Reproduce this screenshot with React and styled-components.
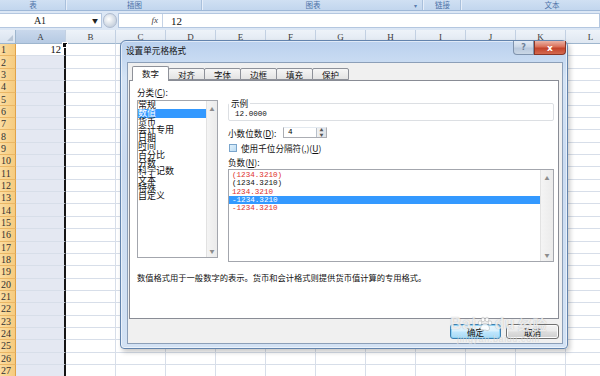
import React from 'react'
import styled, { createGlobalStyle } from 'styled-components'

// Excel 2007 sheet with the "设置单元格格式" dialog open on top of it

const GlobalStyle = createGlobalStyle`
  html, body { margin: 0; padding: 0; background: #fff; }
  body { font-family: "Noto Sans CJK SC", "Liberation Sans", sans-serif; }
`

const Screen = styled.div`
  position: relative;
  width: 600px;
  height: 376px;
  overflow: hidden;
  background: #fff;
  display: flex;
  flex-direction: column;
`

/* ---------- ribbon strip ---------- */
const Ribbon = styled.div`
  display: flex;
  height: 10px;
  background: linear-gradient(#d0e0f3, #c2d6ee);
  border-bottom: 1px solid #9fb8d8;
`
const RibbonGroup = styled.div`
  flex: 0 0 ${p => p.$w}px;
  position: relative;
  display: flex;
  align-items: center;
  justify-content: center;
  border-right: 1px solid #e6eef9;
  box-shadow: inset -1px 0 0 #a9c0dc;
  font-size: 7.5px;
  line-height: 10px;
  color: #4d72a8;
`
const Launcher = styled.span`
  position: absolute;
  right: 6px;
  top: 1px;
  font-size: 6px;
  color: #5a7bab;
`

/* ---------- formula bar ---------- */
const FormulaArea = styled.div`
  display: flex;
  align-items: stretch;
  height: 15px;
  padding: 2px 0 2px;
  background: #dce7f5;
`
const NameBox = styled.div`
  width: 102px;
  display: flex;
  align-items: center;
  background: #fff;
  border: 1px solid #b4c7e0;
  border-left: none;
  box-sizing: border-box;
`
const NameText = styled.span`
  width: 80px;
  text-align: center;
  font-family: "Liberation Serif", serif;
  font-size: 10px;
  color: #222;
`
const DropArrow = styled.span`
  margin-left: 12px;
  font-size: 6px;
  color: #222;
`
const Grip = styled.div`
  width: 14px;
  margin: 0 1px;
  border-radius: 7px;
  background: radial-gradient(circle at 40% 40%, #ffffff, #c9d3df 70%);
  border: 1px solid #aebbd0;
  box-sizing: border-box;
`
const FormulaBox = styled.div`
  flex: 1;
  display: flex;
  align-items: center;
  background: #fff;
  border: 1px solid #b4c7e0;
  box-sizing: border-box;
`
const Fx = styled.span`
  width: 39px;
  text-align: right;
  font-family: "Liberation Serif", serif;
  font-style: italic;
  font-size: 9px;
  color: #444;
  padding-right: 4px;
  border-right: 1px solid #c5d3e6;
  height: 100%;
  line-height: 13px;
`
const FormulaText = styled.span`
  padding-left: 8px;
  font-family: "Liberation Serif", serif;
  font-size: 11px;
  color: #111;
`

/* ---------- worksheet ---------- */
const Sheet = styled.div`
  display: grid;
  grid-template-columns: 16px repeat(12, 50px);
  grid-template-rows: 14px;
  grid-auto-rows: 12.35px;
  margin-top: 0;
`
const Corner = styled.div`
  position: relative;
  background: linear-gradient(#e9eff7, #d9e3ef);
  border-right: 1px solid #9eb6ce;
  border-bottom: 1px solid #9eb6ce;
  &::after {
    content: '';
    position: absolute;
    right: 2px;
    bottom: 2px;
    border-left: 6px solid transparent;
    border-bottom: 6px solid #b9c6d6;
  }
`
const ColHead = styled.div`
  display: flex;
  align-items: center;
  justify-content: center;
  background: ${p => (p.$active ? 'linear-gradient(#c9d8ec, #b6cae3)' : 'linear-gradient(#eef3f9, #dfe7f1)')};
  border-right: 1px solid #c2d0e2;
  border-bottom: 1px solid #9eb6ce;
  font-family: "Liberation Serif", serif;
  font-size: 9px;
  color: #3a3a3a;
`
const RowHead = styled.div`
  display: flex;
  align-items: center;
  padding-left: 1px;
  background: linear-gradient(90deg, #fbdca0, #f6cb7e);
  border-right: 1px solid #e0a24a;
  border-bottom: 1px solid #eab766;
  font-family: "Liberation Serif", serif;
  font-size: 10px;
  color: #333;
  overflow: hidden;
`
const Cell = styled.div`
  position: relative;
  box-sizing: border-box;
  display: flex;
  align-items: center;
  justify-content: flex-end;
  padding-right: 3px;
  background: ${p => (p.$tint ? '#e4e8f2' : '#fff')};
  border-right: ${p => (p.$edge ? '2px solid #151515' : '1px solid #d7dee9')};
  border-bottom: 1px solid #d7dee9;
  font-family: "Liberation Serif", serif;
  font-size: 10.5px;
  color: #111;
`
const FillHandle = styled.span`
  position: absolute;
  right: -4px;
  top: -2px;
  width: 4px;
  height: 4px;
  background: #111;
  border: 1px solid #fff;
`

/* ---------- dialog ---------- */
const Dialog = styled.div`
  position: absolute;
  left: 120px;
  top: 40px;
  width: 448px;
  height: 309px;
  box-sizing: border-box;
  display: flex;
  flex-direction: column;
  border: 1px solid #6384ad;
  border-radius: 6px 6px 4px 4px;
  background: linear-gradient(180deg, #bad1ee 0%, #d4e3f5 12%, #cadbf1 40%, #d3e2f4 100%);
  box-shadow: 2px 3px 5px rgba(0, 0, 0, 0.22), inset 0 0 0 1px rgba(255, 255, 255, 0.55);
`
const TitleBar = styled.div`
  height: 21px;
  display: flex;
  align-items: flex-start;
`
const Title = styled.div`
  padding: 4px 0 0 5px;
  font-size: 8.6px;
  line-height: 11px;
  color: #111;
`
const CaptionButtons = styled.div`
  margin-left: auto;
  margin-right: 1px;
  display: flex;
  height: 14px;
  margin-top: 0;
`
const CaptionBtn = styled.div`
  width: ${p => p.$w}px;
  display: flex;
  align-items: center;
  justify-content: center;
  box-sizing: border-box;
  border: 1px solid ${p => (p.$close ? '#8a3626' : '#7f93ad')};
  border-top: none;
  border-radius: ${p => (p.$close ? '0 0 4px 0' : '0 0 0 4px')};
  background: ${p =>
    p.$close
      ? 'linear-gradient(#eab3a6 0%, #d96e57 45%, #c2432b 55%, #d4694f 100%)'
      : 'linear-gradient(#e3ebf5 0%, #cbd8e8 45%, #b9c9dd 55%, #cad7e6 100%)'};
  color: ${p => (p.$close ? '#fff' : '#6d7f96')};
  font-family: "DejaVu Sans", sans-serif;
  font-weight: bold;
  font-size: ${p => (p.$close ? 9 : 8)}px;
`
const Client = styled.div`
  flex: 1;
  margin: 0 4px 4px 6px;
  display: flex;
  flex-direction: column;
  background: #f0f0f0;
  border: 1px solid #8c9fb8;
`
const TabRow = styled.div`
  display: flex;
  align-items: flex-end;
  height: 14px;
  margin-top: 3px;
  padding-left: 5px;
  position: relative;
  z-index: 1;
`
const Tab = styled.div`
  width: 37px;
  height: ${p => (p.$active ? 15 : 12)}px;
  margin-bottom: ${p => (p.$active ? -1 : 0)}px;
  box-sizing: border-box;
  display: flex;
  align-items: center;
  justify-content: center;
  border: 1px solid #8e9199;
  border-bottom: ${p => (p.$active ? 'none' : '1px solid #8e9199')};
  margin-left: -1px;
  border-radius: 2px 2px 0 0;
  background: ${p => (p.$active ? '#fff' : 'linear-gradient(#f6f6f6, #e3e3e3)')};
  font-size: 8.5px;
  line-height: 10px;
  color: #111;
  padding-bottom: ${p => (p.$active ? 2 : 0)}px;
`
const Panel = styled.div`
  height: 239px;
  margin: 0 3px 0 1px;
  box-sizing: border-box;
  padding: 5px 4px 0 7px;
  background: #fff;
  border: 1px solid #898c95;
  display: flex;
  flex-direction: column;
`
const Columns = styled.div`
  display: grid;
  grid-template-columns: 81px 1fr;
  column-gap: 10px;
`
const Label = styled.div`
  font-size: 8.6px;
  line-height: ${p => p.$lh || 12}px;
  margin-top: ${p => p.$mt || 0}px;
  color: #111;
  white-space: nowrap;
  u { text-decoration: underline; }
`
const ListBox = styled.div`
  position: relative;
  height: ${p => p.$h}px;
  margin-top: ${p => p.$mt || 0}px;
  box-sizing: border-box;
  border: 1px solid #a3a6ad;
  display: flex;
  background: #fff;
`
const ListItems = styled.div`
  flex: 1;
  padding-top: ${p => p.$pt || 0}px;
`
const Item = styled.div`
  height: 8.3px;
  font-size: ${p => (p.$num ? 7.6 : 9)}px;
  font-family: ${p => (p.$num ? '"Liberation Mono", monospace' : 'inherit')};
  line-height: 8.3px;
  padding-left: ${p => (p.$num ? 3 : 0)}px;
  white-space: nowrap;
  color: ${p => (p.$selected ? '#fff' : p.$red ? '#e0312d' : '#111')};
  background: ${p => (p.$selected ? '#3399ff' : 'transparent')};
`
const ScrollBar = styled.div`
  width: ${p => p.$w}px;
  display: flex;
  flex-direction: column;
  justify-content: space-between;
  align-items: center;
  background: linear-gradient(90deg, #f4f4f4, #ebebeb);
  border-left: 1px solid #e2e2e2;
  font-size: 5px;
  color: #8d8d8d;
  padding: 4px 0 3px;
`
const RightCol = styled.div`
  display: flex;
  flex-direction: column;
  padding-top: 11px;
`
const Sample = styled.fieldset`
  margin: 0;
  padding: 0 6px 0;
  border: 1px solid #dcdfe3;
  border-radius: 2px;
  min-width: 0;
  legend {
    padding: 0 2px;
    margin-left: -6px;
    font-size: 8.6px;
    line-height: 12px;
    color: #111;
  }
`
const SampleValue = styled.div`
  font-family: "Liberation Mono", monospace;
  font-size: 7.6px;
  line-height: 11px;
  color: #111;
`
const FieldRow = styled.div`
  display: flex;
  align-items: center;
  height: 11px;
  margin-top: ${p => p.$mt}px;
`
const FieldLabel = styled.span`
  width: 55px;
  font-size: 8.6px;
  color: #111;
  white-space: nowrap;
  u { text-decoration: underline; }
`
const Spin = styled.div`
  width: 44px;
  height: 11px;
  box-sizing: border-box;
  display: flex;
  border: 1px solid #abadb3;
  border-top-color: #e3e9ef;
  background: #fff;
`
const SpinValue = styled.span`
  flex: 1;
  padding-left: 4px;
  font-family: "Liberation Mono", monospace;
  font-size: 7.6px;
  line-height: 9px;
`
const SpinArrows = styled.div`
  width: 9px;
  display: flex;
  flex-direction: column;
  background: linear-gradient(90deg, #f2f2f2, #dfe3e8);
  border-left: 1px solid #b8c0cb;
  font-size: 4px;
  line-height: 4.5px;
  text-align: center;
  color: #555;
`
const Check = styled.span`
  width: 8px;
  height: 8px;
  margin: 0 4px 0 1px;
  box-sizing: border-box;
  border: 1px solid #7aa5cc;
  background: linear-gradient(135deg, #dff0fb, #bcdcf3);
`
const Description = styled.div`
  margin-top: 10px;
  font-size: 8.27px;
  line-height: 11px;
  color: #111;
  white-space: nowrap;
`
const Footer = styled.div`
  display: flex;
  justify-content: flex-end;
  gap: 5px;
  margin-top: 5px;
  padding-right: 3px;
`
const Button = styled.div`
  width: ${p => p.$w}px;
  height: 15px;
  box-sizing: border-box;
  display: flex;
  align-items: center;
  justify-content: center;
  border-radius: 3px;
  border: 1px solid ${p => (p.$default ? '#3c7fb1' : '#707070')};
  background: ${p =>
    p.$default
      ? 'linear-gradient(#eaf6fd 0%, #d9f0fc 45%, #bee6fd 55%, #a7d9f5 100%)'
      : 'linear-gradient(#f2f2f2 0%, #ebebeb 45%, #dddddd 55%, #cfcfcf 100%)'};
  box-shadow: ${p => (p.$default ? 'inset 0 0 0 1px #8fd3f5' : 'inset 0 0 0 1px #fcfcfc')};
  font-size: 8.6px;
  color: #111;
  u { text-decoration: underline; }
`
const Watermark = styled.div`
  position: absolute;
  left: 450px;
  top: 315px;
  display: flex;
  flex-direction: column;
  align-items: center;
  pointer-events: none;
  color: rgba(255, 255, 255, 0.75);
  text-shadow: 0 0 1px rgba(120, 120, 120, 0.55);
`
const WatermarkBrand = styled.div`
  display: flex;
  align-items: center;
  font-family: "Liberation Sans", sans-serif;
  font-weight: bold;
  font-size: 16px;
  line-height: 18px;
  letter-spacing: 0.5px;
  span { font-family: "Noto Sans CJK SC", sans-serif; font-size: 14px; margin-left: 3px; }
`
const WatermarkUrl = styled.div`
  font-family: "Liberation Sans", sans-serif;
  font-size: 9px;
  letter-spacing: 0.6px;
  color: rgba(215, 215, 215, 0.8);
  text-shadow: none;
  margin-top: 1px;
`

const cols = ['A', 'B', 'C', 'D', 'E', 'F', 'G', 'H', 'I', 'J', 'K', 'L']
const rows = Array.from({ length: 27 }, (_, i) => i + 1)
const ribbonGroups = [
  { w: 66, label: '表' },
  { w: 135, label: '插图' },
  { w: 220, label: '图表', launcher: true },
  { w: 37, label: '链接' },
  { w: 180, label: '文本' },
]
const tabs = ['数字', '对齐', '字体', '边框', '填充', '保护']
const categories = ['常规', '数值', '货币', '会计专用', '日期', '时间', '百分比', '分数', '科学记数', '文本', '特殊', '自定义']
const negatives = [
  { text: '(1234.3210)', red: true },
  { text: '(1234.3210)' },
  { text: '1234.3210', red: true },
  { text: '-1234.3210', selected: true },
  { text: '-1234.3210', red: true },
]

const Paw = () => (
  <svg width="16" height="16" viewBox="0 0 16 16" style={{ margin: '0 1px' }}>
    <g fill="rgba(255,255,255,0.8)" stroke="rgba(140,140,140,0.6)" strokeWidth="0.6">
      <ellipse cx="3" cy="7" rx="1.8" ry="2.2" />
      <ellipse cx="6" cy="3.5" rx="1.8" ry="2.3" />
      <ellipse cx="10" cy="3.5" rx="1.8" ry="2.3" />
      <ellipse cx="13" cy="7" rx="1.8" ry="2.2" />
      <path d="M8 7.5c-2.5 0-4.5 3-4.5 5 0 1.6 1.5 2.3 2.6 2 1-.3 1.3-.6 1.9-.6s.9.3 1.9.6c1.1.3 2.6-.4 2.6-2 0-2-2-5-4.5-5z" />
    </g>
  </svg>
)

export default function App() {
  return (
    <Screen>
      <GlobalStyle />
      <Ribbon>
        {ribbonGroups.map(g => (
          <RibbonGroup key={g.label} $w={g.w}>
            {g.label}
            {g.launcher && <Launcher>▾</Launcher>}
          </RibbonGroup>
        ))}
      </Ribbon>

      <FormulaArea>
        <NameBox>
          <NameText>A1</NameText>
          <DropArrow>▼</DropArrow>
        </NameBox>
        <Grip />
        <FormulaBox>
          <Fx>fx</Fx>
          <FormulaText>12</FormulaText>
        </FormulaBox>
      </FormulaArea>

      <Sheet>
        <Corner />
        {cols.map(c => (
          <ColHead key={c} $active={c === 'A'}>{c}</ColHead>
        ))}
        {rows.map(r => (
          <React.Fragment key={r}>
            <RowHead>{r}</RowHead>
            {cols.map(c => {
              const isA = c === 'A'
              return (
                <Cell key={c} $tint={isA && r > 1} $edge={isA}>
                  {isA && r === 1 && (
                    <>
                      12
                      <FillHandle />
                    </>
                  )}
                </Cell>
              )
            })}
          </React.Fragment>
        ))}
      </Sheet>

      <Dialog>
        <TitleBar>
          <Title>设置单元格格式</Title>
          <CaptionButtons>
            <CaptionBtn $w={21}>?</CaptionBtn>
            <CaptionBtn $w={32} $close>x</CaptionBtn>
          </CaptionButtons>
        </TitleBar>

        <Client>
          <TabRow>
            {tabs.map((t, i) => (
              <Tab key={t} $active={i === 0}>{t}</Tab>
            ))}
          </TabRow>

          <Panel>
            <Columns>
              <div>
                <Label>分类(<u>C</u>):</Label>
                <ListBox $h={158} $mt={2}>
                  <ListItems>
                    {categories.map((c, i) => (
                      <Item key={c} $selected={i === 1}>{c}</Item>
                    ))}
                  </ListItems>
                  <ScrollBar $w={10}>
                    <span>▲</span>
                    <span>▼</span>
                  </ScrollBar>
                </ListBox>
              </div>

              <RightCol>
                <Sample>
                  <legend>示例</legend>
                  <SampleValue>12.0000</SampleValue>
                </Sample>
                <FieldRow $mt={6}>
                  <FieldLabel>小数位数(<u>D</u>):</FieldLabel>
                  <Spin>
                    <SpinValue>4</SpinValue>
                    <SpinArrows>
                      <span>▲</span>
                      <span>▼</span>
                    </SpinArrows>
                  </Spin>
                </FieldRow>
                <FieldRow $mt={4}>
                  <Check />
                  <FieldLabel>使用千位分隔符(,)(<u>U</u>)</FieldLabel>
                </FieldRow>
                <Label $lh={11} $mt={4}>负数(<u>N</u>):</Label>
                <ListBox $h={93} $mt={1}>
                  <ListItems $pt={1}>
                    {negatives.map((n, i) => (
                      <Item key={i} $num $red={n.red} $selected={n.selected}>{n.text}</Item>
                    ))}
                  </ListItems>
                  <ScrollBar $w={12}>
                    <span>▲</span>
                    <span>▼</span>
                  </ScrollBar>
                </ListBox>
              </RightCol>
            </Columns>

            <Description>数值格式用于一般数字的表示。货币和会计格式则提供货币值计算的专用格式。</Description>
          </Panel>

          <Footer>
            <Button $w={51} $default>确定</Button>
            <Button $w={53}>取消</Button>
          </Footer>
        </Client>
      </Dialog>

      <Watermark>
        <WatermarkBrand>
          Bai<Paw />du<span>经验</span>
        </WatermarkBrand>
        <WatermarkUrl>jingyan.baidu.com</WatermarkUrl>
      </Watermark>
    </Screen>
  )
}
